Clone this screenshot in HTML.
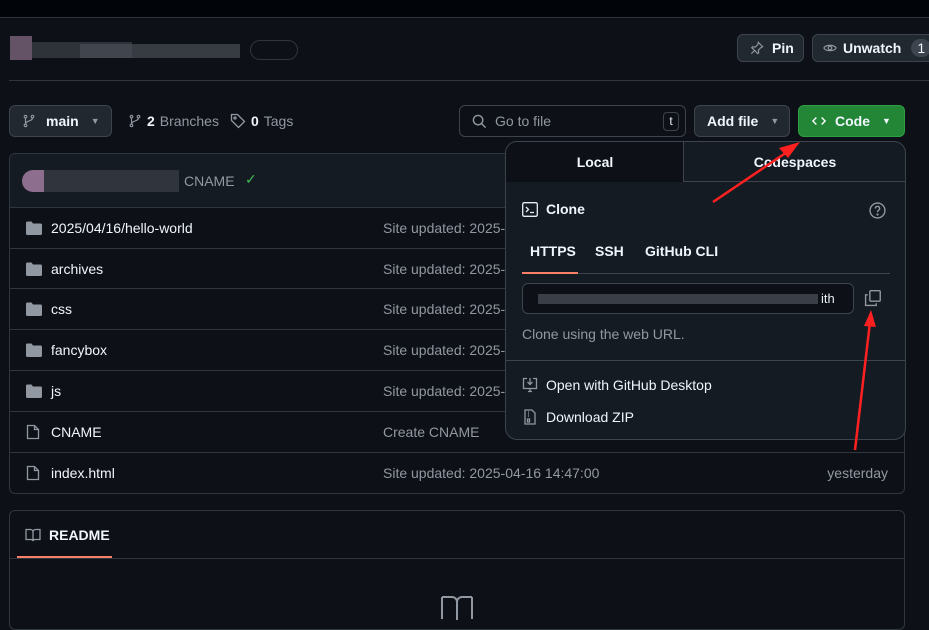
<!DOCTYPE html>
<html><head><meta charset="utf-8"><style>
*{box-sizing:border-box;margin:0;padding:0}
body{width:929px;height:617px;background:#0d1117;font-family:"Liberation Sans",Arial,sans-serif;color:#e6edf3;position:relative;overflow:hidden;font-size:14px}
.a{position:absolute}
.btn{position:absolute;background:#212830;border:1px solid #3d444d;border-radius:6px;color:#f0f6fc;font-weight:bold;display:flex;align-items:center;font-size:14px}
.row{position:absolute;left:10px;width:894px;height:41px;border-top:1px solid #30363d;display:flex;align-items:center}
.row .n{position:absolute;left:41px;color:#f0f6fc}
.row .m{position:absolute;left:373px;color:#9198a1}
.ic{position:absolute;left:16px}
svg{display:block}
</style></head><body>
<div class="a" style="left:0;top:0;width:929px;height:17px;background:#010409"></div>
<div class="a" style="left:0;top:17px;width:929px;height:1px;background:#30363d"></div>
<!-- blurred repo name -->
<div class="a" style="left:10px;top:36px;width:22px;height:24px;background:#8a6e8a;opacity:.7"></div>
<div class="a" style="left:32px;top:42px;width:100px;height:16px;background:#2e333a"></div>
<div class="a" style="left:80px;top:44px;width:160px;height:14px;background:#4a4f57;opacity:.7"></div>
<div class="a" style="left:250px;top:40px;width:48px;height:20px;border:1px solid #30363d;border-radius:10px"></div>
<div class="btn" style="left:737px;top:34px;width:67px;height:28px;padding-left:12px;gap:8px">
<svg width="14" height="14" viewBox="0 0 16 16" fill="none" stroke="#9198a1" stroke-width="1.3"><path d="M9.5 1.5l5 5-2 1-3 3 .5 3-1 1-7-7 1-1 3 .5 3-3z M5 11l-3.5 3.5"/></svg>Pin</div>
<div class="btn" style="left:812px;top:34px;width:130px;height:28px;padding-left:10px;gap:6px">
<svg width="14" height="14" viewBox="0 0 16 16" fill="none" stroke="#9198a1" stroke-width="1.3"><path d="M1 8c2-4 12-4 14 0-2 4-12 4-14 0z"/><circle cx="8" cy="8" r="2"/></svg>Unwatch<span style="background:#3d444d;border-radius:10px;padding:1px 6px;font-weight:normal;margin-left:4px">1</span></div>
<div class="a" style="left:9px;top:80px;width:920px;height:1px;background:#30363d"></div>

<div class="btn" style="left:9px;top:105px;width:103px;height:32px;padding-left:12px;gap:10px">
<svg width="14" height="16" viewBox="0 0 16 16" fill="none" stroke="#9198a1" stroke-width="1.3"><circle cx="4" cy="3" r="1.5"/><circle cx="4" cy="13" r="1.5"/><circle cx="12" cy="3" r="1.5"/><path d="M4 4.5v7M12 4.5c0 4-8 3-8 7"/></svg>main<span style="color:#9198a1;font-size:9px;margin-left:2px">▼</span></div>
<div class="a" style="left:128px;top:113px;display:flex;gap:5px;align-items:center;color:#9198a1">
<svg width="14" height="16" viewBox="0 0 16 16" fill="none" stroke="#9198a1" stroke-width="1.3"><circle cx="4" cy="3" r="1.5"/><circle cx="4" cy="13" r="1.5"/><circle cx="12" cy="3" r="1.5"/><path d="M4 4.5v7M12 4.5c0 4-8 3-8 7"/></svg><b style="color:#f0f6fc">2</b>Branches
<svg width="16" height="16" viewBox="0 0 16 16" fill="none" stroke="#9198a1" stroke-width="1.3" style="margin-left:6px"><path d="M1.5 1.5h6l7 7-6 6-7-7z"/><circle cx="5" cy="5" r="1"/></svg><b style="color:#f0f6fc">0</b>Tags</div>
<div class="a" style="left:459px;top:105px;width:227px;height:32px;border:1px solid #3d444d;border-radius:6px;display:flex;align-items:center;padding-left:12px;gap:8px;color:#9198a1">
<svg width="15" height="15" viewBox="0 0 16 16" fill="none" stroke="#9198a1" stroke-width="1.5"><circle cx="6.5" cy="6.5" r="5"/><path d="M10 10l4.5 4.5"/></svg>Go to file
<span class="a" style="right:6px;top:6px;width:16px;height:19px;border:1px solid #3d444d;border-radius:4px;font-size:12px;text-align:center;line-height:17px;color:#e6edf3">t</span></div>
<div class="btn" style="left:694px;top:105px;width:96px;height:32px;padding-left:12px">Add file<span style="color:#9198a1;font-size:9px;margin-left:12px">▼</span></div>
<div class="btn" style="left:798px;top:105px;width:107px;height:32px;padding-left:12px;background:#238636;border-color:#2ea043;gap:8px">
<svg width="16" height="14" viewBox="0 0 16 16" fill="none" stroke="#fff" stroke-width="1.6"><path d="M5 4L1 8l4 4M11 4l4 4-4 4"/></svg>Code<span style="font-size:9px;margin-left:4px">▼</span></div>

<!-- file table -->
<div class="a" style="left:9px;top:153px;width:896px;height:341px;border:1px solid #30363d;border-radius:6px;overflow:hidden">
<div class="a" style="left:0;top:0;width:894px;height:54px;background:#151b23"></div>
</div>
<div class="a" style="left:22px;top:170px;width:22px;height:22px;background:#8e6e8e;border-radius:11px 0 0 11px"></div>
<div class="a" style="left:44px;top:170px;width:135px;height:22px;background:#30353d"></div>
<div class="a" style="left:184px;top:173px;color:#9198a1">CNAME</div>
<div class="a" style="left:245px;top:171px;color:#3fb950">✓</div>
<div class="row" style="top:207px"><svg class="ic" width="16" height="14" viewBox="0 0 16 14"><path d="M0 2a1.5 1.5 0 011.5-1.5h4l1.5 2h7.5A1.5 1.5 0 0116 4v8.5a1.5 1.5 0 01-1.5 1.5h-13A1.5 1.5 0 010 12.5z" fill="#9198a1"/></svg><span class="n">2025/04/16/hello-world</span><span class="m">Site updated: 2025-04-16 14:47:00</span></div>
<div class="row" style="top:248px"><svg class="ic" width="16" height="14" viewBox="0 0 16 14"><path d="M0 2a1.5 1.5 0 011.5-1.5h4l1.5 2h7.5A1.5 1.5 0 0116 4v8.5a1.5 1.5 0 01-1.5 1.5h-13A1.5 1.5 0 010 12.5z" fill="#9198a1"/></svg><span class="n">archives</span><span class="m">Site updated: 2025-04-16</span></div>
<div class="row" style="top:288px"><svg class="ic" width="16" height="14" viewBox="0 0 16 14"><path d="M0 2a1.5 1.5 0 011.5-1.5h4l1.5 2h7.5A1.5 1.5 0 0116 4v8.5a1.5 1.5 0 01-1.5 1.5h-13A1.5 1.5 0 010 12.5z" fill="#9198a1"/></svg><span class="n">css</span><span class="m">Site updated: 2025-04-16</span></div>
<div class="row" style="top:329px"><svg class="ic" width="16" height="14" viewBox="0 0 16 14"><path d="M0 2a1.5 1.5 0 011.5-1.5h4l1.5 2h7.5A1.5 1.5 0 0116 4v8.5a1.5 1.5 0 01-1.5 1.5h-13A1.5 1.5 0 010 12.5z" fill="#9198a1"/></svg><span class="n">fancybox</span><span class="m">Site updated: 2025-04-16</span></div>
<div class="row" style="top:370px"><svg class="ic" width="16" height="14" viewBox="0 0 16 14"><path d="M0 2a1.5 1.5 0 011.5-1.5h4l1.5 2h7.5A1.5 1.5 0 0116 4v8.5a1.5 1.5 0 01-1.5 1.5h-13A1.5 1.5 0 010 12.5z" fill="#9198a1"/></svg><span class="n">js</span><span class="m">Site updated: 2025-04-16</span></div>
<div class="row" style="top:411px"><svg class="ic" width="14" height="16" viewBox="0 0 14 16" fill="none" stroke="#9198a1" stroke-width="1.3"><path d="M1.5 1.5h7l4 4v9h-11z M8.5 1.5v4h4"/></svg><span class="n">CNAME</span><span class="m">Create CNAME</span></div>
<div class="row" style="top:452px"><svg class="ic" width="14" height="16" viewBox="0 0 14 16" fill="none" stroke="#9198a1" stroke-width="1.3"><path d="M1.5 1.5h7l4 4v9h-11z M8.5 1.5v4h4"/></svg><span class="n">index.html</span><span class="m">Site updated: 2025-04-16 14:47:00</span><span style="position:absolute;right:16px;color:#9198a1">yesterday</span></div>

<!-- README -->
<div class="a" style="left:9px;top:510px;width:896px;height:120px;border:1px solid #30363d;border-radius:6px"></div>
<div class="a" style="left:10px;top:558px;width:894px;height:1px;background:#30363d"></div>
<div class="a" style="left:17px;top:556px;width:95px;height:2px;background:#f78166"></div>
<div class="a" style="left:25px;top:527px;display:flex;gap:8px;align-items:center;font-weight:bold;color:#f0f6fc">
<svg width="16" height="14" viewBox="0 0 16 14" fill="none" stroke="#9198a1" stroke-width="1.3"><path d="M1 1.5h4.5a2.5 2.5 0 012.5 2.5v9a2 2 0 00-2-1.5H1zM15 1.5h-4.5A2.5 2.5 0 008 4v9a2 2 0 012-1.5h5z"/></svg>README</div>
<svg class="a" style="left:441px;top:596px" width="32" height="24" viewBox="0 0 32 24" fill="none" stroke="#9198a1" stroke-width="2"><path d="M1 1h10a5 5 0 015 5v18M31 1H21a5 5 0 00-5 5M1 1v22M31 1v22"/></svg>

<!-- popover -->
<div class="a" style="left:505px;top:141px;width:401px;height:299px;background:#151b23;border:1px solid #3d444d;border-radius:12px;overflow:hidden">
<div class="a" style="left:0;top:0;width:178px;height:40px;background:#0d1117;border-right:1px solid #3d444d"></div>
<div class="a" style="left:178px;top:39px;width:222px;height:1px;background:#3d444d"></div>
<div class="a" style="left:0;top:12px;width:178px;text-align:center;font-weight:bold;color:#f0f6fc">Local</div>
<div class="a" style="left:178px;top:12px;width:222px;text-align:center;font-weight:bold;color:#f0f6fc">Codespaces</div>
<div class="a" style="left:16px;top:59px;display:flex;gap:8px;align-items:center;font-weight:bold;color:#f0f6fc">
<svg width="16" height="15" viewBox="0 0 16 15" fill="none" stroke="#e6edf3" stroke-width="1.3"><rect x=".7" y=".7" width="14.6" height="13.6" rx="1.5"/><path d="M4 5l2.5 2.5L4 10M8 10.5h4"/></svg>Clone</div>
<svg class="a" style="left:363px;top:60px" width="17" height="17" viewBox="0 0 16 16" fill="none" stroke="#9198a1" stroke-width="1.3"><circle cx="8" cy="8" r="7"/><path d="M6 6.2a2 2 0 113 1.6c-.8.5-1 .9-1 1.7"/><circle cx="8" cy="11.8" r=".4" fill="#9198a1"/></svg>
<div class="a" style="left:24px;top:101px;font-weight:bold;color:#f0f6fc">HTTPS</div>
<div class="a" style="left:89px;top:101px;font-weight:bold;color:#f0f6fc">SSH</div>
<div class="a" style="left:139px;top:101px;font-weight:bold;color:#f0f6fc">GitHub CLI</div>
<div class="a" style="left:16px;top:131px;width:368px;height:1px;background:#3d444d"></div>
<div class="a" style="left:16px;top:130px;width:56px;height:2px;background:#f78166"></div>
<div class="a" style="left:16px;top:141px;width:332px;height:31px;border:1px solid #3d444d;border-radius:6px;background:#0d1117"></div>
<div class="a" style="left:32px;top:152px;width:280px;height:10px;background:#3a3f47"></div>
<div class="a" style="left:315px;top:149px;font-size:13px;color:#e6edf3">ith</div>
<svg class="a" style="left:358px;top:148px" width="17" height="17" viewBox="0 0 16 16" fill="none" stroke="#9198a1" stroke-width="1.3"><rect x="5.5" y=".7" width="9.8" height="9.8" rx="1"/><path d="M3.5 4.5h-2v10h10v-2"/></svg>
<div class="a" style="left:16px;top:184px;color:#9198a1">Clone using the web URL.</div>
<div class="a" style="left:0;top:218px;width:400px;height:1px;background:#3d444d"></div>
<div class="a" style="left:16px;top:235px;display:flex;gap:8px;align-items:center;color:#f0f6fc">
<svg width="16" height="16" viewBox="0 0 16 16" fill="none" stroke="#9198a1" stroke-width="1.3"><path d="M5 1.5H1.5v10h13v-10H11M8 1v6M5.5 5L8 7.5 10.5 5M6 14.5h4M8 11.5v3"/></svg>Open with GitHub Desktop</div>
<div class="a" style="left:16px;top:267px;display:flex;gap:8px;align-items:center;color:#f0f6fc">
<svg width="16" height="16" viewBox="0 0 16 16" fill="none" stroke="#9198a1" stroke-width="1.3"><path d="M3 1h7l3 3v11H3z M6 3h1M6 5h1M6 7h1M5.5 10h2v3h-2z"/></svg>Download ZIP</div>
</div>

<!-- red arrows -->
<svg class="a" style="left:0;top:0" width="929" height="617" viewBox="0 0 929 617">
<path d="M713 202L790 150" stroke="#ff2020" stroke-width="2.5"/><path d="M800 142L779 148L788 158z" fill="#ff2020"/>
<path d="M855 450L870 322" stroke="#ff2020" stroke-width="2.5"/><path d="M871 310L864 326L876 327z" fill="#ff2020"/>
</svg>
</body></html>
